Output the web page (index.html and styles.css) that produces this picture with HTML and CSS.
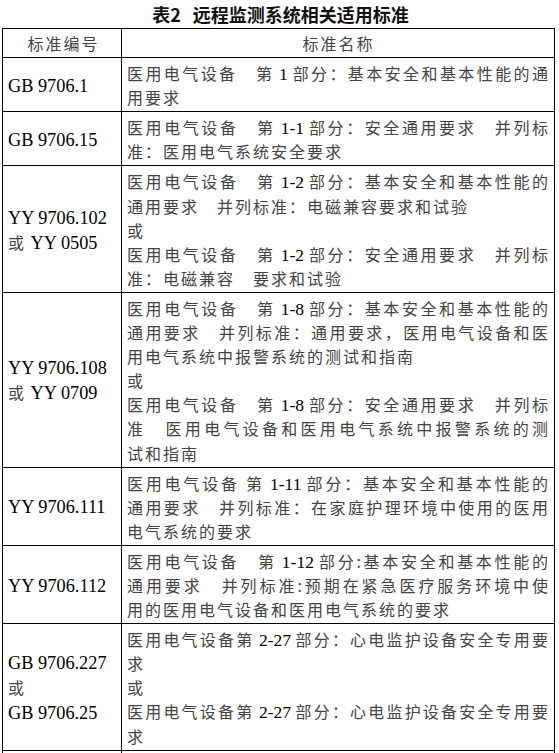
FILE: index.html
```html
<!DOCTYPE html>
<html lang="zh-CN">
<head>
<meta charset="utf-8">
<title>表2 远程监测系统相关适用标准</title>
<link rel="stylesheet" href="styles.css">
</head>
<body>
<div class="page">
  <h1 class="title"><span class="tnum">表2</span>远程监测系统相关适用标准</h1>
  <table class="std">
    <colgroup><col class="c1"><col class="c2"></colgroup>
    <thead>
      <tr><th>标准编号</th><th>标准名称</th></tr>
    </thead>
    <tbody>
      <tr>
        <td class="code"><span class="n">GB 9706.1</span></td>
        <td class="name">
          <span class="ln j">医用电气设备　第<span class="n"> 1 </span>部分：基本安全和基本性能的通</span>
          <span class="ln">用要求</span>
        </td>
      </tr>
      <tr>
        <td class="code"><span class="n">GB 9706.15</span></td>
        <td class="name">
          <span class="ln j">医用电气设备　第<span class="n"> 1-1 </span>部分：安全通用要求　并列标</span>
          <span class="ln">准：医用电气系统安全要求</span>
        </td>
      </tr>
      <tr>
        <td class="code"><span class="n">YY 9706.102</span><br>或<span class="n"> YY 0505</span></td>
        <td class="name">
          <span class="ln j">医用电气设备　第<span class="n"> 1-2 </span>部分：基本安全和基本性能的</span>
          <span class="ln">通用要求　并列标准：电磁兼容要求和试验</span>
          <span class="ln">或</span>
          <span class="ln j">医用电气设备　第<span class="n"> 1-2 </span>部分：安全通用要求　并列标</span>
          <span class="ln">准：电磁兼容　要求和试验</span>
        </td>
      </tr>
      <tr>
        <td class="code"><span class="n">YY 9706.108</span><br>或<span class="n"> YY 0709</span></td>
        <td class="name">
          <span class="ln j">医用电气设备　第<span class="n"> 1-8 </span>部分：基本安全和基本性能的</span>
          <span class="ln j">通用要求　并列标准：通用要求，医用电气设备和医</span>
          <span class="ln">用电气系统中报警系统的测试和指南</span>
          <span class="ln">或</span>
          <span class="ln j">医用电气设备　第<span class="n"> 1-8 </span>部分：安全通用要求　并列标</span>
          <span class="ln j">准　医用电气设备和医用电气系统中报警系统的测</span>
          <span class="ln">试和指南</span>
        </td>
      </tr>
      <tr>
        <td class="code"><span class="n">YY 9706.111</span></td>
        <td class="name">
          <span class="ln j">医用电气设备 第<span class="n"> 1-11 </span>部分：基本安全和基本性能的</span>
          <span class="ln j">通用要求　并列标准：在家庭护理环境中使用的医用</span>
          <span class="ln">电气系统的要求</span>
        </td>
      </tr>
      <tr>
        <td class="code"><span class="n">YY 9706.112</span></td>
        <td class="name">
          <span class="ln j">医用电气设备　第<span class="n"> 1-12 </span>部分:基本安全和基本性能的</span>
          <span class="ln j">通用要求　并列标准:预期在紧急医疗服务环境中使</span>
          <span class="ln">用的医用电气设备和医用电气系统的要求</span>
        </td>
      </tr>
      <tr>
        <td class="code"><span class="n">GB 9706.227</span><br>或<br><span class="n">GB 9706.25</span></td>
        <td class="name">
          <span class="ln j">医用电气设备第<span class="n"> 2-27 </span>部分：心电监护设备安全专用要</span>
          <span class="ln">求</span>
          <span class="ln">或</span>
          <span class="ln j">医用电气设备第<span class="n"> 2-27 </span>部分：心电监护设备安全专用要</span>
          <span class="ln">求</span>
        </td>
      </tr>
      <tr class="more"><td></td><td></td></tr>
    </tbody>
  </table>
</div>
</body>
</html>
```

FILE: styles.css
```css
html, body {
  margin: 0;
  padding: 0;
  background: #fff;
}

.page {
  width: 559px;
  height: 753px;
  overflow: hidden;
}

.title {
  margin: 0;
  height: 28px;
  line-height: 28px;
  text-align: center;
  font-family: "Noto Sans CJK SC", sans-serif;
  font-size: 18px;
  font-weight: 700;
  color: #111;
  padding-left: 2px;
}

.tnum {
  margin-right: 12px;
}

.std {
  margin-left: 2px;
  width: 553px;
  border-collapse: collapse;
  table-layout: fixed;
  font-family: "Liberation Serif", "Noto Sans CJK SC", serif;
  font-size: 16px;
  color: #444;
  letter-spacing: 2px;
}

.c1 { width: 119px; }

.std th,
.std td {
  border: 1px solid #000;
  padding: 3px 4px 2px 5px;
  line-height: 24.1px;
  font-weight: 400;
  font-family: "Noto Sans CJK SC", sans-serif;
}

.std th {
  text-align: center;
  height: 23px;
  padding-top: 2px;
}

.std th:first-child {
  padding-right: 2px;
}

.std td.code {
  vertical-align: middle;
  text-align: left;
  line-height: 25px;
  white-space: nowrap;
}

.std td.name {
  vertical-align: top;
}

.n {
  font-family: "Liberation Serif", serif;
  font-size: 17.5px;
  line-height: 1;
  color: #000;
  letter-spacing: 0;
}

.code .n {
  font-size: 18.3px;
}

.ln {
  display: block;
  white-space: nowrap;
  text-align: left;
}

.ln.j {
  text-align: justify;
  text-align-last: justify;
}

.more td {
  height: 30px;
  padding: 0;
}
```
